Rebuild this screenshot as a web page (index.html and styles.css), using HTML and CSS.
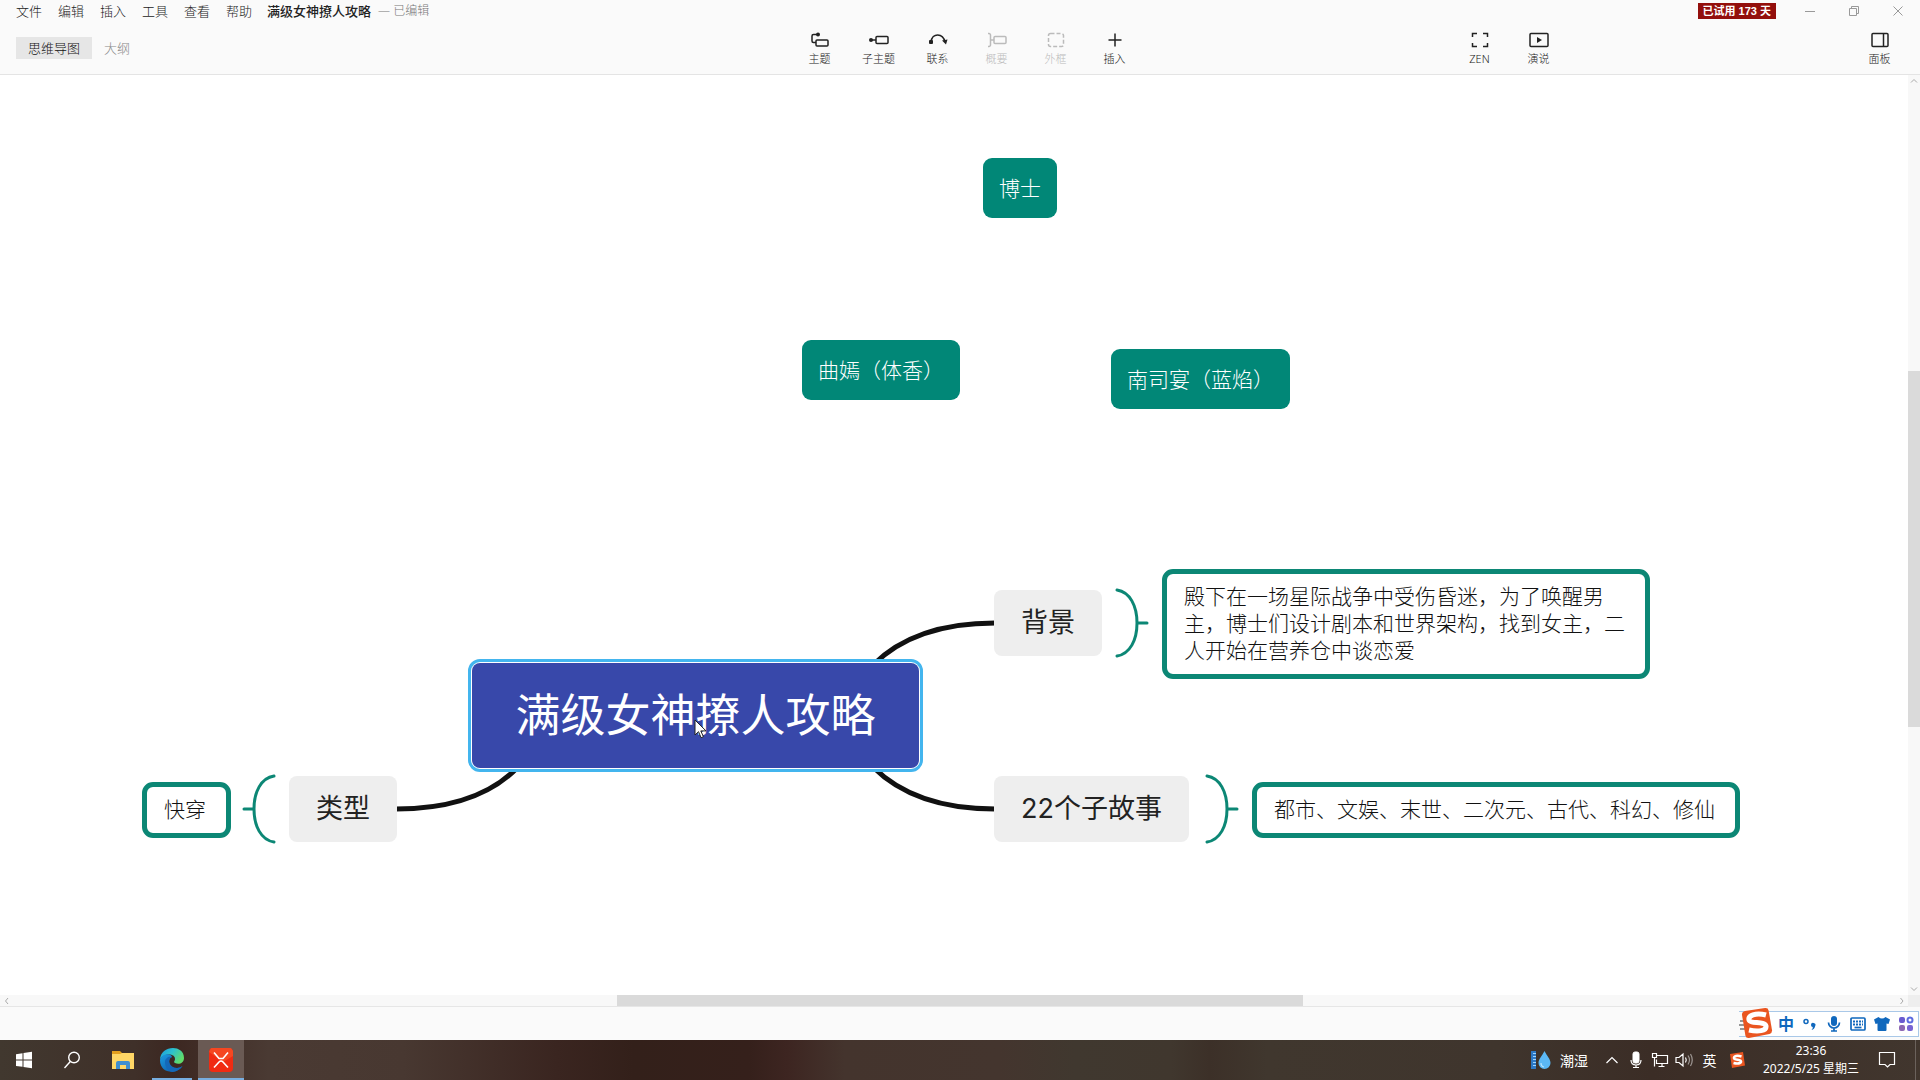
FILE: index.html
```html
<!DOCTYPE html>
<html lang="zh-CN">
<head>
<meta charset="utf-8">
<title>满级女神撩人攻略</title>
<link rel="stylesheet" href="styles.css">
</head>
<body>
<header class="header">
  <div class="titlebar">
    <nav class="menu">
      <button>文件</button><button>编辑</button><button>插入</button><button>工具</button><button>查看</button><button>帮助</button>
    </nav>
    <h1 class="doc-title">满级女神撩人攻略</h1>
    <span class="doc-state">— 已编辑</span>
    <span class="trial">已试用 173 天</span>
    <div class="window-controls">
      <button aria-label="最小化"><svg width="12" height="12" viewBox="0 0 12 12"><path d="M1 6.500h10"/></svg></button>
      <button aria-label="还原"><svg width="12" height="12" viewBox="0 0 12 12"><path d="M1.500 3.500h7v7h-7zM3.500 3.500v-2h7v7h-2"/></svg></button>
      <button aria-label="关闭"><svg width="12" height="12" viewBox="0 0 12 12"><path d="M1.500 1.500l9 9M10.500 1.500l-9 9"/></svg></button>
    </div>
  </div>
  <div class="toolbar">
    <div class="tabs">
      <button class="tab tab-active">思维导图</button>
      <button class="tab">大纲</button>
    </div>
    <div class="tools">
      <button class="tool"><svg width="20" height="16" viewBox="0 0 20 16"><path d="M7 2.500H3.500a1.500 1.500 0 0 0-1.500 1.500v5a1.500 1.500 0 0 0 1.500 1.500H6"/><rect x="6" y="8" width="12" height="6" rx="1"/><circle class="solid" cx="8" cy="2.500" r="2"/></svg>主题</button>
      <button class="tool"><svg width="20" height="16" viewBox="0 0 20 16"><path d="M3 8h4"/><rect x="7" y="4.500" width="12" height="7" rx="1"/><circle class="solid" cx="2" cy="8" r="2"/></svg>子主题</button>
      <button class="tool"><svg width="20" height="16" viewBox="0 0 20 16"><path d="M3 10C4 0.500 15 0.500 17 10"/><rect class="solid" x="1" y="8" width="4" height="4" rx="1"/><path class="solid" d="M14 8.500l5.500-1-1.500 5z"/></svg>联系</button>
      <button class="tool" disabled><svg width="20" height="16" viewBox="0 0 20 16"><path d="M1 1.500h1a1.500 1.500 0 0 1 1.500 1.500v10a1.500 1.500 0 0 1-1.500 1.500H1M3.500 8H7"/><rect x="7" y="4.500" width="12" height="7" rx="1"/></svg>概要</button>
      <button class="tool" disabled><svg width="20" height="16" viewBox="0 0 20 16"><rect x="2.500" y="1.500" width="15" height="13" rx="2" stroke-dasharray="4 2"/></svg>外框</button>
      <button class="tool"><svg width="20" height="16" viewBox="0 0 20 16"><path d="M10 1.500v13M3.500 8h13"/></svg>插入</button>
    </div>
    <div class="tools tools-view">
      <button class="tool"><svg width="20" height="16" viewBox="0 0 20 16"><path d="M2.500 5V1.500H7M13 1.500h4.500V5M17.500 11v3.500H13M7 14.500H2.500V11"/></svg>ZEN</button>
      <button class="tool"><svg width="20" height="16" viewBox="0 0 20 16"><rect x="1" y="1.500" width="18" height="13" rx="1"/><path class="solid" d="M8 5v6l5-3z"/></svg>演说</button>
    </div>
    <div class="tools tools-panel">
      <button class="tool"><svg width="20" height="16" viewBox="0 0 20 16"><rect x="2" y="1.500" width="16" height="13" rx="1"/><path d="M13.500 1.500v13"/></svg>面板</button>
    </div>
  </div>
</header>

<main class="workspace">
  <div class="canvas">
    <svg class="links" width="1800" height="900" viewBox="0 0 1800 900">
      <g class="branch">
        <path d="M995 548C942 548 902 561 873 590"/>
        <path d="M995 734C942 734 902 721 873 692"/>
        <path d="M396 734C450 734 490 721 518 692"/>
      </g>
      <g class="brace">
        <path d="M1117 515C1130 517 1137 531 1137 548C1137 565 1130 579 1117 581M1137 548h10"/>
        <path d="M1207 701C1220 703 1227 717 1227 734C1227 751 1220 765 1207 767M1227 734h10"/>
        <path d="M274 701C261 703 254 717 254 734C254 751 261 765 274 767M254 734h-10"/>
      </g>
    </svg>
    <div class="node floating n-doctor">博士</div>
    <div class="node floating n-quyan">曲嫣（体香）</div>
    <div class="node floating n-nansi">南司宴（蓝焰）</div>
    <div class="node root">满级女神撩人攻略</div>
    <div class="node topic n-background">背景</div>
    <div class="node topic n-stories">22个子故事</div>
    <div class="node topic n-type">类型</div>
    <div class="node summary n-background-note">殿下在一场星际战争中受伤昏迷，为了唤醒男主，博士们设计剧本和世界架构，找到女主，二人开始在营养仓中谈恋爱</div>
    <div class="node summary n-stories-note">都市、文娱、末世、二次元、古代、科幻、修仙</div>
    <div class="node summary n-type-note">快穿</div>
    <svg class="pointer" width="14" height="20" viewBox="0 0 14 20"><path d="M1 1v15l3.500-3.300 2.600 6 2.300-1-2.600-5.800H12z"/></svg>
  </div>
  <div class="scroll scroll-y">
    <svg width="12" height="12" viewBox="0 0 12 12"><path d="M3 7.500l3-3 3 3"/></svg>
    <span class="gap-before"></span><span class="thumb"></span><span class="gap-after"></span>
    <svg width="12" height="12" viewBox="0 0 12 12"><path d="M3 4.500l3 3 3-3"/></svg>
  </div>
  <div class="scroll scroll-x">
    <svg width="12" height="12" viewBox="0 0 12 12"><path d="M8 3L5.500 6 8 9"/></svg>
    <span class="gap-before"></span><span class="thumb"></span><span class="gap-after"></span>
    <svg width="12" height="12" viewBox="0 0 12 12"><path d="M4.500 3L7 6 4.500 9"/></svg>
  </div>
  <div class="scroll-corner"></div>
</main>

<footer class="statusbar">
  <div class="ime">
    <svg class="ime-logo" width="34" height="32" viewBox="0 0 34 32"><path d="M1 14h5M0 18h5M1 22h6" stroke="#333" stroke-width="1"/><path d="M6 4L26 1q3-.4 3.600 2.400L33 23q.4 3-2.500 4L10 31q-3 .4-3.600-2.500L3 8q-.3-3.300 3-4z" fill="#ea5520"/><path d="M27 8C16 5 9 9 10 13c1 4 16 1 17 6 .6 5-8 6-17 4" fill="none" stroke="#fff" stroke-width="5"/></svg>
    <button class="ime-mode">中</button>
    <button aria-label="标点"><svg width="16" height="16" viewBox="0 0 16 16"><circle cx="4" cy="5.500" r="2" fill="none" stroke="#1068bd" stroke-width="1.500"/><path d="M9 9a2.200 2.200 0 1 1 4.200 1Q12.500 13.500 9.500 14q1.500-1.500 1.300-3A2 2 0 0 1 9 9z" fill="#1068bd"/></svg></button>
    <button aria-label="语音"><svg width="16" height="16" viewBox="0 0 16 16"><rect x="5" y="0" width="6" height="10" rx="3" fill="#1068bd"/><path d="M2.500 6.500a5.500 5.500 0 0 0 11 0M8 12v3M5 15h6" fill="none" stroke="#1068bd" stroke-width="1.700"/></svg></button>
    <button aria-label="软键盘"><svg width="16" height="16" viewBox="0 0 16 16"><rect x="1" y="2" width="14" height="12" rx="1" fill="none" stroke="#1068bd" stroke-width="1.700"/><path d="M3 5.500h10M3 8.500h10" stroke="#1068bd" stroke-width="1.800" stroke-dasharray="2 1"/><path d="M4.500 11.500h7" stroke="#1068bd" stroke-width="1.700"/></svg></button>
    <button aria-label="皮肤"><svg width="16" height="16" viewBox="0 0 16 16"><path d="M4.500 1q3.500 3 7 0L16 3.500 14.500 8l-2-.5V14q0 1-1 1h-7q-1 0-1-1V7.500L1.500 8 0 3.500z" fill="#1068bd"/></svg></button>
    <button aria-label="工具箱"><svg width="16" height="16" viewBox="0 0 16 16" fill="none" stroke-width="2"><rect x="2" y="2" width="4" height="4" rx="1" fill="#6a5bd0" stroke="#6a5bd0"/><circle cx="12" cy="4" r="2.500" stroke="#5d6be0"/><rect x="2" y="10" width="4" height="4" rx="1" fill="#8d68b4" stroke="#8d68b4"/><rect x="10" y="10" width="4" height="4" rx="1" fill="#7864d4" stroke="#7864d4"/></svg></button>
  </div>
</footer>

<div class="taskbar">
  <div class="apps">
    <button class="app" aria-label="开始"><svg width="18" height="18" viewBox="0 0 18 18" fill="#fff"><path d="M1 3.200l6.500-1v6.300H1zM8.500 2L17 .8v7.700H8.500zM1 9.500h6.500v6.300L1 14.900zM8.500 9.500H17v7.700L8.500 16z"/></svg></button>
    <button class="app" aria-label="搜索"><svg width="18" height="18" viewBox="0 0 18 18" fill="none" stroke="#fff" stroke-width="1.400"><circle cx="11" cy="6.500" r="5.300"/><path d="M7.300 10.500L1.500 17"/></svg></button>
    <button class="app app-files" aria-label="文件资源管理器"><svg width="22" height="20" viewBox="0 0 22 20"><path d="M0 1h8l2 2h11v7H0z" fill="#e4a01e"/><path d="M0 4h8l2-1h12v16H0z" fill="#ffd766"/><path d="M4 19v-6q0-2 2-2h10q2 0 2 2v6h-4v-4H8v4z" fill="#3f8fcf"/></svg></button>
    <button class="app app-open" aria-label="Edge"><svg width="24" height="24" viewBox="0 0 24 24"><defs><linearGradient id="edge-top" x1="0" y1="0" x2="1" y2=".5"><stop offset="0" stop-color="#1a9bdc"/><stop offset=".5" stop-color="#2cc1cf"/><stop offset="1" stop-color="#60dc6a"/></linearGradient><linearGradient id="edge-low" x1="0" y1="0" x2="1" y2="1"><stop offset="0" stop-color="#1b9de2"/><stop offset="1" stop-color="#0c4f9f"/></linearGradient></defs><path d="M0 12C0-3 24-4 24 10c0 5-5 7-9 5-2-1 0-2 0-4C15 5 3 5 0 12z" fill="url(#edge-top)"/><path d="M0 12C2 5 11 5 12 9c-5 1-4 12 5 11 2 0 4-1 5.500-2C18 26 0 27 0 12z" fill="url(#edge-low)"/><path d="M5 14c0-4 4-6 7-5-5 2-3 11 5 11 2 0 4-1 5.500-2-2 3-6 5.800-10 6C7 23 5 18 5 14z" fill="#1468b8"/></svg></button>
    <button class="app app-current" aria-label="XMind"><svg width="24" height="24" viewBox="0 0 24 24"><rect width="24" height="24" rx="4" fill="#f02b12"/><path d="M2 0h20l2 3v5L14 14 0 4z" fill="#f85a2c" opacity=".6"/><path d="M5 4.500l5 6h4l5-6M5 19.500l5-5.500q2-2 4 0l5 5.500" fill="none" stroke="#fff" stroke-width="1.600"/></svg></button>
  </div>
  <div class="tray">
    <button class="weather"><svg width="22" height="20" viewBox="0 0 22 20"><rect x="1" y="1" width="5" height="18" fill="#2c78c4"/><path d="M3 3.500h3M3 6.500h3M3 9.500h3M3 12.500h3M3 15.500h3" stroke="#9ed5ff"/><path d="M14.500 1C12 6 8.500 9 8.500 13a6 6 0 0 0 12 0C20.500 9 17 6 14.500 1z" fill="#5bb8f5"/><path d="M11 13a4 4 0 0 0 3 4" fill="none" stroke="#b8e4ff"/></svg>潮湿</button>
    <button class="t-chevron" aria-label="显示隐藏的图标"><svg width="14" height="16" viewBox="0 0 14 16"><path d="M1.500 11L7 5.500l5.500 5.500"/></svg></button>
    <button class="t-mic" aria-label="麦克风"><svg width="12" height="18" viewBox="0 0 12 18"><rect x="3" y="1" width="6" height="11" rx="2" fill="#fff"/><path d="M1 9q0 5 5 5t5-5M6 14v3M3 16.500h6"/></svg></button>
    <button class="t-net" aria-label="网络"><svg width="18" height="16" viewBox="0 0 18 16"><path d="M5.500 3.500h11v8h-11v-4M11 11.500v3M7.500 14.500h6M1.500 1.500h4v4h-4zM3.500 5.500v9"/></svg></button>
    <button class="t-vol" aria-label="音量"><svg width="18" height="16" viewBox="0 0 18 16"><path d="M1 5.500h3l4-3.500v12l-4-3.500H1zM10.500 5.500q1.500 2.500 0 5"/><path d="M13 3.500q3 4.500 0 9M15.500 2q3.500 6 0 12" opacity=".5"/></svg></button>
    <button class="t-lang">英</button>
    <button class="t-sogou" aria-label="搜狗输入法"><svg width="16" height="16" viewBox="0 0 16 16"><path d="M1 2L14 0l2 13.500L3 16z" fill="#ea5520"/><path class="s-mark" d="M12.500 4.500C8 3 5 4 5 6c0 2.500 7 1 7 3.500 0 2-3.500 2.500-7.500 1.500" fill="none" stroke="#fff"/></svg></button>
    <button class="clock"><time>23:36</time><span>2022/5/25 星期三</span></button>
    <button class="t-notice" aria-label="通知"><svg width="18" height="18" viewBox="0 0 18 18"><path d="M1.500 1.500h15v12h-4.500L9.500 16 7 13.500H1.500z"/></svg></button>
    <span class="desktop-edge"></span>
  </div>
</div>
</body>
</html>
```
FILE: styles.css
```css
* { box-sizing: border-box; }

body {
  margin: 0;
  min-height: 100vh;
  display: flex;
  flex-direction: column;
  font-family: "Noto Sans", "Noto Sans CJK SC", sans-serif;
  font-size: 13px;
  color: #222;
  background: #fff;
  overflow: hidden;
}

button {
  margin: 0;
  padding: 0;
  border: 0;
  background: none;
  font: inherit;
  color: inherit;
}

svg { display: block; flex: none; }

/* Header */
.header {
  height: 75px;
  font-weight: 300;
  background: #fafafa;
  border-bottom: 1px solid #e4e4e4;
}

.titlebar {
  display: flex;
  align-items: center;
  height: 22px;
  padding: 0 16px;
  line-height: 22px;
}

.menu { display: flex; gap: 16px; }

.doc-title {
  margin: 0 7px 0 15px;
  font-size: 13px;
  font-weight: 500;
}

.doc-state { color: #777; font-size: 12px; }

.trial {
  margin-left: auto;
  padding: 0 5px;
  font-size: 11px;
  font-weight: 700;
  line-height: 16px;
  color: #fff;
  background: #930f0c;
  font-family: "Liberation Sans", "Noto Sans CJK SC", sans-serif;
}

.window-controls { display: flex; gap: 32px; margin-left: 28px; }
.window-controls path { fill: none; stroke: #999; }

.toolbar {
  display: grid;
  grid-template-columns: 790fr 354px 306fr 118px 282fr 59px 11px;
  height: 52px;
}

.tabs {
  display: flex;
  align-items: center;
  height: 22px;
  margin-top: 15px;
  padding-left: 16px;
}

.tab { padding: 0 12px; line-height: 22px; color: #888; }
.tab-active { background: #e6e6e6; color: #111; }

.tools { display: flex; grid-column: 2; }
.tools-view { grid-column: 4; }
.tools-panel { grid-column: 6; }

.tool {
  display: flex;
  flex-direction: column;
  align-items: center;
  gap: 3px;
  width: 59px;
  padding-top: 10px;
  font-size: 11px;
  line-height: 16px;
}

.tool:disabled { color: #bbb; }
.tool svg { fill: none; stroke: currentColor; stroke-width: 1.5; }
.tool .solid { fill: currentColor; stroke: none; }

/* Canvas */
.workspace {
  flex: 1;
  display: grid;
  grid-template-columns: 1fr 12px;
  grid-template-rows: 1fr 12px;
}

.canvas { position: relative; overflow: hidden; }
.links { position: absolute; left: 0; top: 0; fill: none; }
.branch { stroke: #111; stroke-width: 5; }
.brace { stroke: #0c8775; stroke-width: 3; stroke-linecap: round; }

.node { position: absolute; font-size: 21px; font-weight: 300; line-height: 27px; }

.floating {
  padding: 17px 16px 16px;
  border-radius: 9px;
  color: #fff;
  background: #018777;
  white-space: nowrap;
}

.root {
  left: 472px;
  top: 588px;
  width: 447px;
  height: 105px;
  border-radius: 8px;
  outline: 3px solid #43b5ee;
  outline-offset: 1px;
  box-shadow: 0 0 0 2px #fff;
  color: #fff;
  background: #3848aa;
  font-size: 45px;
  font-weight: 400;
  line-height: 104px;
  text-align: center;
}

.topic {
  height: 66px;
  padding: 0 27px;
  border-radius: 8px;
  background: #eee;
  font-family: Inter, "Noto Sans CJK SC", sans-serif;
  font-size: 27px;
  font-weight: 400;
  line-height: 65px;
  white-space: nowrap;
}

.summary {
  padding: 9px 17px 10px;
  border: 5px solid #0c8775;
  border-radius: 11px;
  color: #111;
  background: #fff;
}

.n-doctor { left: 983px; top: 83px; }
.n-quyan { left: 802px; top: 265px; }
.n-nansi { left: 1111px; top: 274px; }
.n-background { left: 994px; top: 515px; }
.n-stories { left: 994px; top: 701px; }
.n-type { left: 289px; top: 701px; }
.n-background-note { left: 1162px; top: 494px; width: 488px; }
.n-stories-note { left: 1252px; top: 707px; width: 488px; }
.n-type-note { left: 142px; top: 707px; width: 89px; }

.pointer { position: absolute; left: 694px; top: 644px; fill: #fff; stroke: #222; }

/* Scroll bars */
.scroll { display: flex; background: #f8f8f8; }
.scroll path { fill: none; stroke: #aaa; }
.scroll-y { flex-direction: column; }
.scroll-x { border-bottom: 1px solid #e6e6e6; }
.thumb { background: #dadada; }
.scroll-y .gap-before { flex: 284; }
.scroll-y .thumb { flex: 356; }
.scroll-y .gap-after { flex: 256; }
.scroll-x .gap-before { flex: 605; }
.scroll-x .thumb { flex: 686; }
.scroll-x .gap-after { flex: 593; }
.scroll-corner { background: #eee; }

/* Status strip and input method bar */
.statusbar {
  display: flex;
  justify-content: flex-end;
  align-items: center;
  height: 33px;
  padding-right: 1px;
  background: #fafafa;
}

.ime {
  display: flex;
  align-items: center;
  gap: 8px;
  height: 26px;
  padding-right: 4px;
  border: 1px solid #a9c8e8;
  border-left: 0;
  background: linear-gradient(90deg, #fafafa 16px, #fff 16px);
}

.ime-logo { margin: 0 -3px 2px 0; }

.ime-mode {
  width: 16px;
  font-size: 16px;
  font-weight: 700;
  line-height: 24px;
  color: #1068bd;
}

/* Task bar */
.taskbar {
  display: flex;
  justify-content: space-between;
  height: 40px;
  color: #fff;
  background: linear-gradient(90deg, #41382f 0%, #3f3029 7%, #3c2721 9%, #4a3a33 14%, #483831 21%, #3a2520 29%, #33201a 33%, #35201b 39%, #3d2521 41%, #44342d 44%, #44352e 52%, #40382f 56%, #40372e 61%, #3c3028 63%, #40372e 66%, #3f352d 78%, #3b2d26 86%, #41362e 100%);
}

.apps { display: flex; }

.app {
  display: flex;
  justify-content: center;
  align-items: center;
  width: 48px;
  border-bottom: 2px solid transparent;
  border-top: 2px solid transparent;
}

.app-files { padding-left: 6px; }
.app-open { width: 40px; margin: 0 6px 0 8px; border-bottom-color: #78aee0; }
.app-current { width: 46px; border-bottom-color: #78aee0; background: #6a5a54; }

.tray { display: flex; align-items: stretch; }
.tray button { display: flex; align-items: center; justify-content: center; }
.tray path { stroke-width: 1.2; }
.tray .s-mark { stroke-width: 2.6; }
.t-chevron svg, .t-mic svg, .t-net svg, .t-vol svg, .t-notice svg { fill: none; stroke: #fff; }

.tray .weather { gap: 8px; margin-right: 10px; font-size: 14px; }
.t-chevron { width: 28px; }
.t-mic { width: 20px; }
.t-net { width: 28px; }
.t-vol { width: 20px; }
.t-lang { width: 31px; font-size: 14px; }
.t-sogou { width: 24px; }

.tray .clock {
  flex-direction: column;
  width: 124px;
  padding-bottom: 1px;
  font-size: 12px;
  line-height: 18px;
}

.t-notice { width: 28px; }
.desktop-edge { width: 5px; margin-left: 14px; border-left: 1px solid #6b625c; }
```
